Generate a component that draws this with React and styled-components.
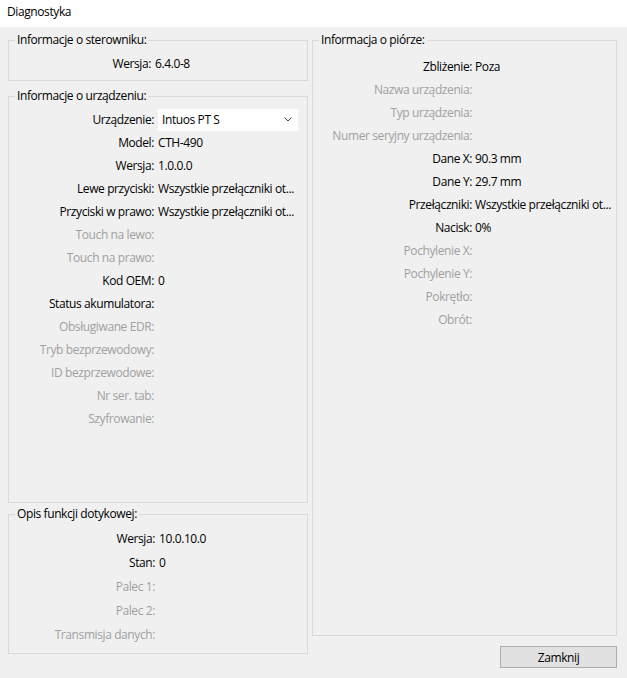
import React from "react";
import styled, { createGlobalStyle } from "styled-components";

const Global = createGlobalStyle`
  html, body { margin: 0; padding: 0; }
  body {
    background: #f0f0f0;
    font-family: "Segoe UI", "Open Sans", "Noto Sans", sans-serif;
    font-size: 12px;
    letter-spacing: -0.4px;
    color: #000;
  }
`;

const Window = styled.div`
  width: 627px;
  height: 678px;
  display: flex;
  flex-direction: column;
  background: #f0f0f0;
  overflow: hidden;
`;

const TitleBar = styled.div`
  height: 27px;
  box-sizing: border-box;
  background: #fff;
  padding: 4px 0 0 7px;
  line-height: 16px;
  font-size: 12px;
`;

const Main = styled.div`
  flex: 1;
  display: grid;
  grid-template-columns: 300px 305px;
  column-gap: 4px;
  padding: 5px 10px 10px 8px;
  min-height: 0;
`;

const Column = styled.div`
  display: flex;
  flex-direction: column;
  padding-bottom: ${(p) => p.$padBottom || 0}px;
  min-height: 0;
`;

const Group = styled.fieldset`
  margin: 0;
  margin-top: ${(p) => p.$mt || 0}px;
  border: 1px solid #d9d9d9;
  padding: ${(p) => p.$pt || 0}px 0 ${(p) => p.$pb || 0}px 0;
  min-width: 0;
  flex: ${(p) => (p.$grow ? 1 : "0 0 auto")};
  box-sizing: border-box;
`;

const Legend = styled.legend`
  margin-left: 6px;
  padding: 0 2px;
  line-height: 16px;
  font-size: 12px;
  color: #000;
`;

const Row = styled.div`
  display: grid;
  grid-template-columns: ${(p) => p.$labelW}px minmax(0, 1fr);
  column-gap: ${(p) => p.$gap ?? 4}px;
  height: ${(p) => p.$h || 23}px;
  align-items: center;
  padding-right: 2px;
`;

const Label = styled.span`
  text-align: right;
  white-space: nowrap;
  color: ${(p) => (p.$disabled ? "#a0a0a0" : "#000")};
`;

const Value = styled.span`
  white-space: nowrap;
  overflow: hidden;
  color: #000;
`;

const Combo = styled.div`
  width: 140px;
  height: 22px;
  box-sizing: border-box;
  background: #fff;
  display: flex;
  align-items: center;
  justify-content: space-between;
  padding: 0 6px 0 4px;
`;

const Chevron = () => (
  <svg width="8" height="5" viewBox="0 0 8 5" aria-hidden="true">
    <path d="M0.5 0.5 L4 4 L7.5 0.5" fill="none" stroke="#444" strokeWidth="1" />
  </svg>
);

const Footer = styled.div`
  display: flex;
  justify-content: flex-end;
  margin-top: 10px;
`;

const Button = styled.button`
  width: 117px;
  height: 22px;
  background: #e1e1e1;
  border: 1px solid #adadad;
  font-family: inherit;
  font-size: 12px;
  letter-spacing: inherit;
  color: #000;
  padding: 0;
  cursor: pointer;
`;

const Field = ({ label, value, disabled, labelW, gap, h, children }) => (
  <Row $labelW={labelW} $gap={gap} $h={h}>
    <Label $disabled={disabled}>{label}</Label>
    {children || <Value>{value}</Value>}
  </Row>
);

const deviceRows = [
  { label: "Model:", value: "CTH-490" },
  { label: "Wersja:", value: "1.0.0.0" },
  { label: "Lewe przyciski:", value: "Wszystkie przełączniki ot..." },
  { label: "Przyciski w prawo:", value: "Wszystkie przełączniki ot..." },
  { label: "Touch na lewo:", disabled: true },
  { label: "Touch na prawo:", disabled: true },
  { label: "Kod OEM:", value: "0" },
  { label: "Status akumulatora:" },
  { label: "Obsługiwane EDR:", disabled: true },
  { label: "Tryb bezprzewodowy:", disabled: true },
  { label: "ID bezprzewodowe:", disabled: true },
  { label: "Nr ser. tab:", disabled: true },
  { label: "Szyfrowanie:", disabled: true },
];

const touchRows = [
  { label: "Wersja:", value: "10.0.10.0" },
  { label: "Stan:", value: "0" },
  { label: "Palec 1:", disabled: true },
  { label: "Palec 2:", disabled: true },
  { label: "Transmisja danych:", disabled: true },
];

const penRows = [
  { label: "Zbliżenie:", value: "Poza" },
  { label: "Nazwa urządzenia:", disabled: true },
  { label: "Typ urządzenia:", disabled: true },
  { label: "Numer seryjny urządzenia:", disabled: true },
  { label: "Dane X:", value: "90.3 mm" },
  { label: "Dane Y:", value: "29.7 mm" },
  { label: "Przełączniki:", value: "Wszystkie przełączniki ot..." },
  { label: "Nacisk:", value: "0%" },
  { label: "Pochylenie X:", disabled: true },
  { label: "Pochylenie Y:", disabled: true },
  { label: "Pokrętło:", disabled: true },
  { label: "Obrót:", disabled: true },
];

export default function App() {
  return (
    <>
      <Global />
      <Window>
        <TitleBar>Diagnostyka</TitleBar>
        <Main>
          <Column $padBottom={14}>
            <Group $pt={4} $pb={5}>
              <Legend>Informacje o sterowniku:</Legend>
              <Field label="Wersja:" value="6.4.0-8" labelW={142} />
            </Group>
            <Group $mt={7} $pt={4} $grow>
              <Legend>Informacje o urządzeniu:</Legend>
              <Field label="Urządzenie:" labelW={145}>
                <Combo>
                  <span>Intuos PT S</span>
                  <Chevron />
                </Combo>
              </Field>
              {deviceRows.map((r) => (
                <Field key={r.label} {...r} labelW={145} />
              ))}
            </Group>
            <Group $mt={3} $pt={4} $pb={7}>
              <Legend>Opis funkcji dotykowej:</Legend>
              {touchRows.map((r) => (
                <Field key={r.label} {...r} labelW={146} gap={4} h={24} />
              ))}
            </Group>
          </Column>
          <Column>
            <Group $pt={7} $grow>
              <Legend>Informacja o piórze:</Legend>
              {penRows.map((r) => (
                <Field key={r.label} {...r} labelW={159} gap={3} />
              ))}
            </Group>
            <Footer>
              <Button>Zamknij</Button>
            </Footer>
          </Column>
        </Main>
      </Window>
    </>
  );
}
